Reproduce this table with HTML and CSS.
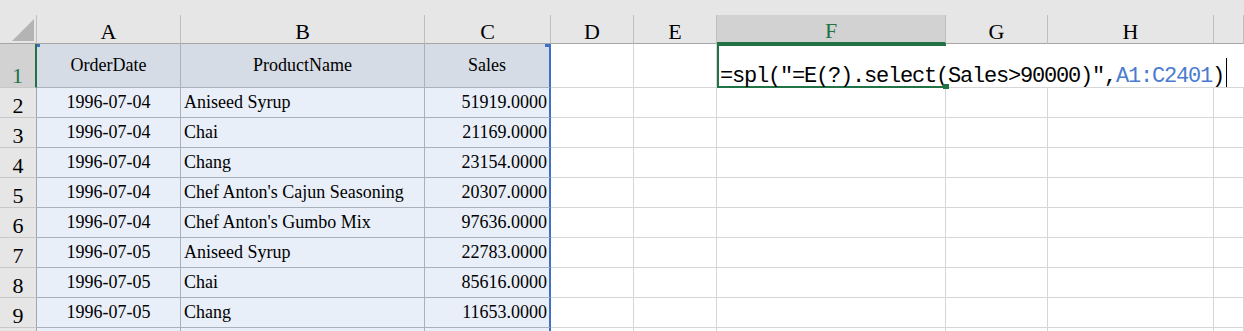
FILE: index.html
```html
<!DOCTYPE html>
<html lang="en">
<head>
    <meta charset="UTF-8">
    <meta name="viewport" content="width=device-width, initial-scale=1.0">
    <title>Sheet1</title>
    <link rel="stylesheet" href="styles.css">
</head>
<body>
    <div class="strip"></div>
    <div class="sheet">
        <!-- column headers -->
        <div class="corner"><span class="tri"></span></div>
        <div class="colhdr">A</div>
        <div class="colhdr">B</div>
        <div class="colhdr">C</div>
        <div class="colhdr">D</div>
        <div class="colhdr">E</div>
        <div class="colhdr active">F</div>
        <div class="colhdr">G</div>
        <div class="colhdr">H</div>
        <div class="colhdr"></div>

        <!-- row 1 -->
        <div class="rowhdr active">1</div>
        <div class="rng head first">OrderDate</div>
        <div class="rng head">ProductName</div>
        <div class="rng head last">Sales</div>
        <div class="cell"></div>
        <div class="cell"></div>
        <div class="editor">
            <div class="sel">
                <span class="formula">=spl(″=E(?).select(Sales&gt;90000)″,<span class="ref">A1:C2401</span>)</span>
                <span class="caret"></span>
                <span class="handle"></span>
            </div>
        </div>

        <!-- row 2 -->
        <div class="rowhdr">2</div>
        <div class="rng c-date">1996-07-04</div>
        <div class="rng c-name">Aniseed Syrup</div>
        <div class="rng c-num last">51919.0000</div>
        <div class="cell"></div><div class="cell"></div><div class="cell"></div>
        <div class="cell"></div><div class="cell"></div><div class="cell"></div>

        <!-- row 3 -->
        <div class="rowhdr">3</div>
        <div class="rng c-date">1996-07-04</div>
        <div class="rng c-name">Chai</div>
        <div class="rng c-num last">21169.0000</div>
        <div class="cell"></div><div class="cell"></div><div class="cell"></div>
        <div class="cell"></div><div class="cell"></div><div class="cell"></div>

        <!-- row 4 -->
        <div class="rowhdr">4</div>
        <div class="rng c-date">1996-07-04</div>
        <div class="rng c-name">Chang</div>
        <div class="rng c-num last">23154.0000</div>
        <div class="cell"></div><div class="cell"></div><div class="cell"></div>
        <div class="cell"></div><div class="cell"></div><div class="cell"></div>

        <!-- row 5 -->
        <div class="rowhdr">5</div>
        <div class="rng c-date">1996-07-04</div>
        <div class="rng c-name">Chef Anton's Cajun Seasoning</div>
        <div class="rng c-num last">20307.0000</div>
        <div class="cell"></div><div class="cell"></div><div class="cell"></div>
        <div class="cell"></div><div class="cell"></div><div class="cell"></div>

        <!-- row 6 -->
        <div class="rowhdr">6</div>
        <div class="rng c-date">1996-07-04</div>
        <div class="rng c-name">Chef Anton's Gumbo Mix</div>
        <div class="rng c-num last">97636.0000</div>
        <div class="cell"></div><div class="cell"></div><div class="cell"></div>
        <div class="cell"></div><div class="cell"></div><div class="cell"></div>

        <!-- row 7 -->
        <div class="rowhdr">7</div>
        <div class="rng c-date">1996-07-05</div>
        <div class="rng c-name">Aniseed Syrup</div>
        <div class="rng c-num last">22783.0000</div>
        <div class="cell"></div><div class="cell"></div><div class="cell"></div>
        <div class="cell"></div><div class="cell"></div><div class="cell"></div>

        <!-- row 8 -->
        <div class="rowhdr">8</div>
        <div class="rng c-date">1996-07-05</div>
        <div class="rng c-name">Chai</div>
        <div class="rng c-num last">85616.0000</div>
        <div class="cell"></div><div class="cell"></div><div class="cell"></div>
        <div class="cell"></div><div class="cell"></div><div class="cell"></div>

        <!-- row 9 -->
        <div class="rowhdr">9</div>
        <div class="rng c-date">1996-07-05</div>
        <div class="rng c-name">Chang</div>
        <div class="rng c-num last">11653.0000</div>
        <div class="cell"></div><div class="cell"></div><div class="cell"></div>
        <div class="cell"></div><div class="cell"></div><div class="cell"></div>

        <!-- row 10, only its top edge shows -->
        <div class="rowhdr"></div>
        <div class="rng c-date"></div>
        <div class="rng c-name"></div>
        <div class="rng c-num last"></div>
        <div class="cell"></div><div class="cell"></div><div class="cell"></div>
        <div class="cell"></div><div class="cell"></div><div class="cell"></div>
    </div>
</body>
</html>
```

FILE: styles.css
```css
html, body {
    margin: 0;
    padding: 0;
    height: 100%;
    overflow: hidden;
}
body {
    font-family: "Liberation Serif", "Times New Roman", serif;
    background-color: #fff;
    color: #000;
}
.strip {
    height: 15px;
    background-color: #e6e6e6;
}
.sheet {
    display: grid;
    grid-template-columns: 37px 144px 244px 126px 83px 83px 229px 102px 166px minmax(0, 1fr);
    grid-template-rows: 29px 44px;
    grid-auto-rows: 30px;
}
.sheet > div {
    box-sizing: border-box;
    display: flex;
    align-items: center;
    white-space: nowrap;
    font-size: 18px;
    border-right: 1px solid #d6d6d6;
    border-bottom: 1px solid #d6d6d6;
}

/* headers */
.corner {
    justify-content: flex-end;
    align-items: flex-end !important;
    padding: 0 2px 2px 0;
    background-color: #e6e6e6;
    border-right-color: #bfbfbf !important;
    border-bottom-color: #a6a6a6 !important;
}
.tri {
    width: 22px;
    height: 22px;
    background-color: #b4b4b4;
    clip-path: polygon(100% 0, 100% 100%, 0 100%);
}
.sheet > .colhdr {
    justify-content: center;
    align-items: flex-end;
    font-size: 22px;
    line-height: 1;
    background-color: #e6e6e6;
    border-right-color: #bfbfbf;
    border-bottom-color: #a6a6a6;
}
.sheet > .colhdr.active {
    background-color: #d2d2d2;
    color: #217346;
    border-bottom: 2px solid #217346;
}
.sheet > .rowhdr {
    justify-content: center;
    align-items: flex-end;
    font-size: 22px;
    line-height: 1;
    background-color: #e6e6e6;
    border-right-color: #a6a6a6;
    border-bottom-color: #c8c8c8;
}
.sheet > .rowhdr.active {
    background-color: #d2d2d2;
    color: #217346;
    border-right: 2px solid #217346;
}

/* referenced range A1:C2401 */
.sheet > .rng {
    background-color: #e9eff8;
    border-right-color: #abb1bb;
    border-bottom-color: #abb1bb;
}
.sheet > .rng.head {
    position: relative;
    justify-content: center;
    background-color: #d6dce5;
}
.sheet > .rng.last {
    border-right: 2px solid #3f6fc6;
}
.rng.head.first::before,
.rng.head.last::before {
    content: "";
    position: absolute;
    top: 0;
    width: 3px;
    height: 3px;
    background-color: #3f6fc6;
}
.rng.head.first::before {
    left: 0;
}
.rng.head.last::before {
    right: -2px;
    width: 6px;
}
.c-date {
    justify-content: center;
}
.c-name {
    padding-left: 3px;
}
.c-num {
    justify-content: flex-end;
    padding-right: 2px;
}

/* cell being edited */
.sheet > .editor {
    grid-column: span 4;
    align-items: stretch;
    border-right: none;
    background-color: #fff;
}
.sel {
    position: relative;
    box-sizing: border-box;
    width: 229px;
    margin-bottom: -1px;
    padding-left: 1px;
    border: 2px solid #217346;
    border-right: none;
    display: flex;
    align-items: flex-end;
}
.formula {
    font-family: "Liberation Mono", "DejaVu Sans Mono", monospace;
    font-size: 22px;
    letter-spacing: -1.2px;
    line-height: 1;
    margin-bottom: -2px;
}
.ref {
    color: #4a7bd0;
}
.caret {
    flex: none;
    width: 1px;
    height: 29px;
    margin: 0 0 -1px 2px;
    background-color: #000;
}
.handle {
    position: absolute;
    right: -3px;
    bottom: -3px;
    width: 6px;
    height: 5px;
    background-color: #217346;
}
```
